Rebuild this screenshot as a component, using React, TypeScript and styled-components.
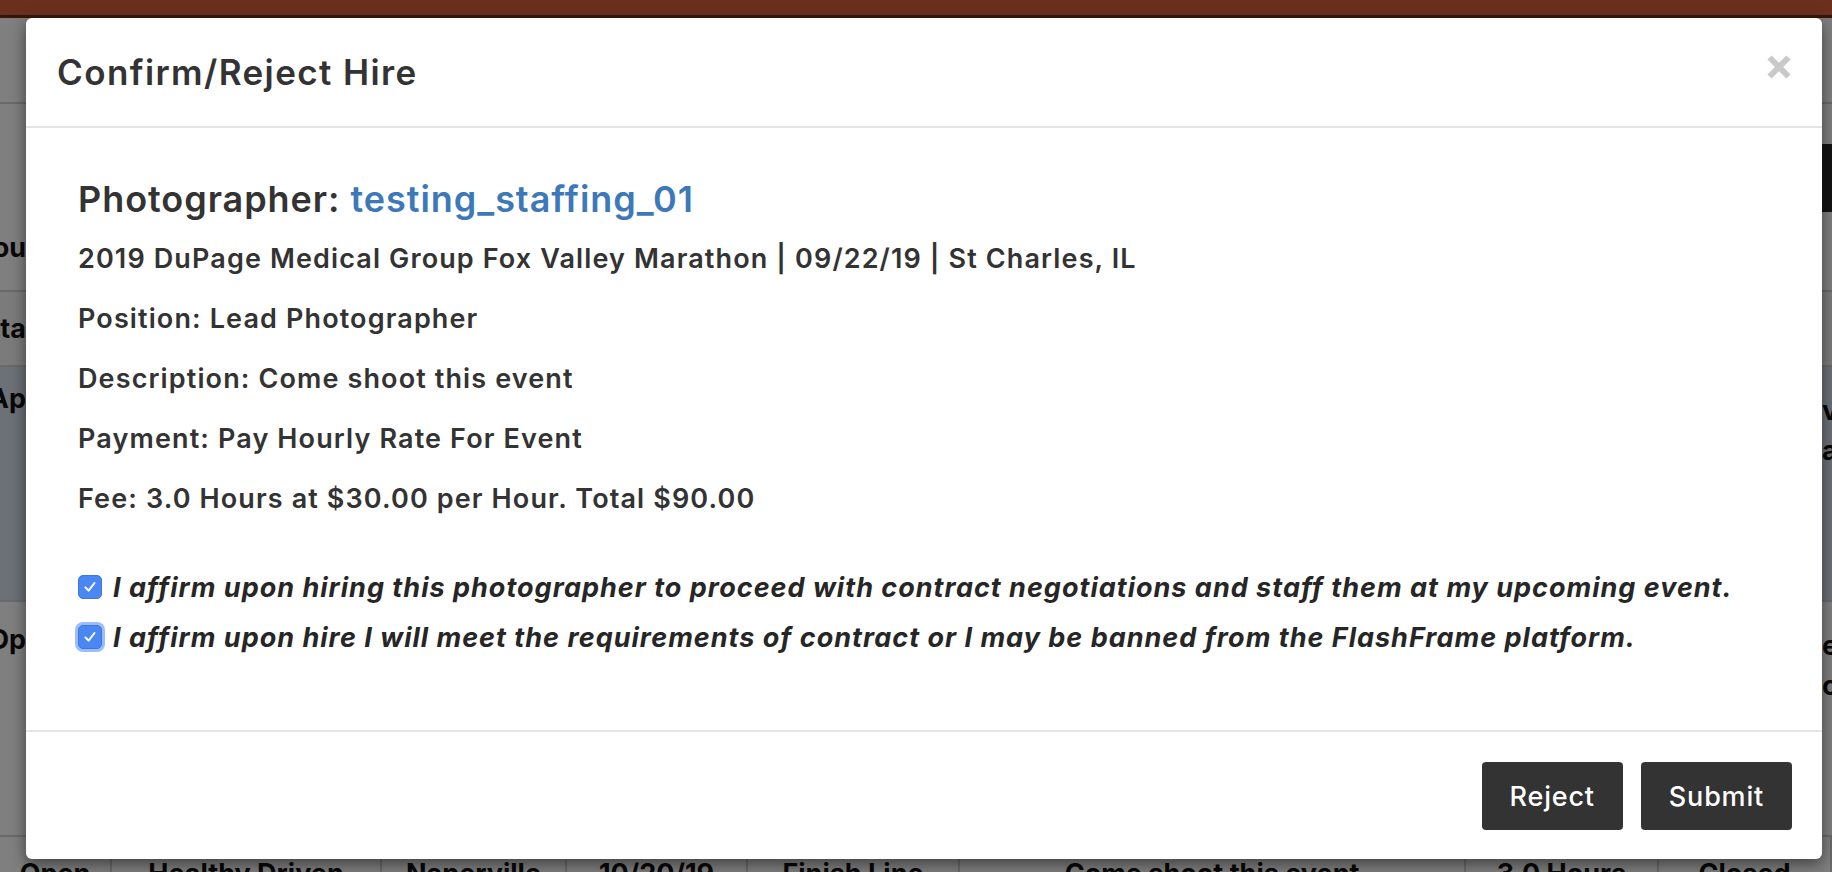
import React from "react";
import styled, { createGlobalStyle } from "styled-components";

const Global = createGlobalStyle`
  html, body { margin: 0; padding: 0; }
  body {
    width: 1832px;
    height: 872px;
    overflow: hidden;
    background: #fff;
    font-family: Inter, "Noto Sans", sans-serif;
  }
`;

const Stage = styled.div`
  position: relative;
  width: 1832px;
  height: 872px;
  overflow: hidden;
`;

/* ---------- dimmed page behind the dialog ---------- */
const Page = styled.div`
  display: flex;
  flex-direction: column;
  height: 100%;
  background: #fff;
  color: #111;
  font-weight: 700;
`;

const TopBar = styled.div`
  flex: none;
  height: 15px;
  background: #d6603a;
  border-bottom: 3px solid #6e2c14;
`;

const Row = styled.div<{ $h: number; $bg?: string }>`
  flex: none;
  display: flex;
  height: ${(p) => p.$h}px;
  background: ${(p) => p.$bg || "#fff"};
  border-bottom: 2px solid #d4d4d4;
`;

const EdgeCell = styled.div<{ $w: number; $align: "start" | "end"; $top?: number }>`
  flex: none;
  width: ${(p) => p.$w}px;
  overflow: hidden;
  display: flex;
  flex-direction: column;
  align-items: ${(p) => (p.$align === "end" ? "flex-end" : "flex-start")};
  justify-content: ${(p) => (p.$top !== undefined ? "flex-start" : "center")};
  padding-top: ${(p) => p.$top || 0}px;
  box-sizing: border-box;
  font-size: 27px;
  line-height: 40px;
  white-space: nowrap;
`;

const Middle = styled.div`
  flex: 1;
`;

const DarkButton = styled.div`
  background: #262626;
  color: #ddd;
  height: 68px;
  padding: 0 12px;
  display: flex;
  align-items: center;
  font-size: 26px;
`;

const BottomRow = styled.div`
  flex: 1;
  display: flex;
  background: #fff;
`;

const BottomCell = styled.div<{ $w: number }>`
  flex: none;
  width: ${(p) => p.$w}px;
  border-right: 2px solid #d4d4d4;
  box-sizing: border-box;
  text-align: center;
  padding-top: 20px;
  font-size: 27px;
  white-space: nowrap;
  overflow: hidden;
`;

const Overlay = styled.div`
  position: absolute;
  inset: 0;
  background: rgba(0, 0, 0, 0.5);
`;

/* ---------- dialog ---------- */
const Dialog = styled.div`
  position: absolute;
  left: 26px;
  top: 18px;
  width: 1796px;
  height: 841px;
  background: #fff;
  border-radius: 6px;
  box-shadow: 0 5px 15px rgba(0, 0, 0, 0.5);
  display: flex;
  flex-direction: column;
  color: #333;
`;

const Header = styled.div`
  flex: none;
  height: 108px;
  display: flex;
  align-items: center;
  justify-content: space-between;
  padding: 0 31px;
  border-bottom: 2px solid #e5e5e5;
`;

const Title = styled.h4`
  margin: 0;
  font-size: 35px;
  font-weight: 600;
  letter-spacing: 1.4px;
  color: #333;
`;

const CloseButton = styled.button`
  border: 0;
  background: none;
  padding: 0;
  margin-bottom: 10px;
  width: 24px;
  height: 24px;
  display: flex;
  cursor: pointer;
`;

const Body = styled.div`
  flex: 1;
  padding: 51px 52px 0;
  display: flex;
  flex-direction: column;
`;

const Heading = styled.h3`
  margin: 0 0 25px;
  font-size: 36px;
  line-height: 40px;
  font-weight: 600;
  letter-spacing: 0.95px;
  color: #333;
`;

const Link = styled.a`
  color: #3d79b8;
  text-decoration: none;
`;

const Line = styled.p`
  margin: 0 0 30px;
  font-size: 27px;
  line-height: 30px;
  font-weight: 600;
  letter-spacing: 1.12px;
  color: #333;
`;

const Affirmations = styled.div`
  margin-top: 28px;
  display: flex;
  flex-direction: column;
  gap: 20px;
`;

const AffirmRow = styled.label`
  display: flex;
  align-items: center;
  gap: 11px;
  height: 30px;
  font-size: 27px;
  font-weight: 700;
  font-style: italic;
  letter-spacing: 1px;
  color: #262626;
`;

const Check = styled.span<{ $focus?: boolean }>`
  flex: none;
  width: 24px;
  height: 24px;
  box-sizing: border-box;
  border-radius: 5px;
  background: #4a87f2;
  border: 1px solid #3c76de;
  display: flex;
  align-items: center;
  justify-content: center;
  box-shadow: ${(p) => (p.$focus ? "0 0 0 3px rgba(74, 135, 242, 0.55)" : "none")};
`;

const Footer = styled.div`
  flex: none;
  border-top: 2px solid #e5e5e5;
  padding: 30px 30px 29px;
  display: flex;
  justify-content: flex-end;
  gap: 18px;
`;

const ActionButton = styled.button`
  height: 68px;
  padding: 0 28px;
  border: 0;
  border-radius: 4px;
  background: #333;
  color: #fff;
  font-family: Inter, "Noto Sans", sans-serif;
  font-size: 27px;
  font-weight: 500;
  letter-spacing: 0.8px;
  cursor: pointer;
`;

const CheckMark = () => (
  <svg width="14" height="14" viewBox="0 0 14 14">
    <path d="M2.5 7.5 L5.6 10.6 L11.5 3" fill="none" stroke="#fff" strokeWidth="2" strokeLinecap="round" strokeLinejoin="round" />
  </svg>
);

const CloseIcon = () => (
  <svg width="24" height="24" viewBox="0 0 24 24">
    <path d="M2.5 2.5 L21.5 21.5 M21.5 2.5 L2.5 21.5" stroke="#c9c9c9" strokeWidth="6" />
  </svg>
);

const details = [
  "2019 DuPage Medical Group Fox Valley Marathon | 09/22/19 | St Charles, IL",
  "Position: Lead Photographer",
  "Description: Come shoot this event",
  "Payment: Pay Hourly Rate For Event",
  "Fee: 3.0 Hours at $30.00 per Hour. Total $90.00",
];

const bottomCells: [number, string][] = [
  [112, "Open"],
  [270, "Healthy Driven"],
  [185, "Naperville"],
  [181, "10/20/19"],
  [212, "Finish Line"],
  [506, "Come shoot this event"],
  [193, "3.0 Hours"],
  [173, "Closed"],
];

export default function App() {
  return (
    <Stage>
      <Global />
      <Page>
        <TopBar />
        <Row $h={84}>
          <EdgeCell $w={26} $align="end" />
          <Middle />
          <EdgeCell $w={10} $align="start" />
        </Row>
        <Row $h={186}>
          <EdgeCell $w={26} $align="end" $top={124}>You</EdgeCell>
          <Middle />
          <EdgeCell $w={10} $align="start" $top={40}>
            <DarkButton>Sign</DarkButton>
          </EdgeCell>
        </Row>
        <Row $h={73} $bg="#f7f7f7">
          <EdgeCell $w={26} $align="end">Sta</EdgeCell>
          <Middle />
          <EdgeCell $w={10} $align="start" />
        </Row>
        <Row $h={233} $bg="#d9e0ef">
          <EdgeCell $w={26} $align="end" $top={12}>Ap</EdgeCell>
          <Middle />
          <EdgeCell $w={10} $align="start" $top={24}>
            <span>view</span>
            <span>apply</span>
          </EdgeCell>
        </Row>
        <Row $h={233}>
          <EdgeCell $w={26} $align="end" $top={18}>Op</EdgeCell>
          <Middle />
          <EdgeCell $w={10} $align="start" $top={24}>
            <span>event</span>
            <span>open</span>
          </EdgeCell>
        </Row>
        <BottomRow>
          {bottomCells.map(([w, t]) => (
            <BottomCell key={t} $w={w}>{t}</BottomCell>
          ))}
        </BottomRow>
      </Page>
      <Overlay />

      <Dialog role="dialog" aria-labelledby="hire-title">
        <Header>
          <Title id="hire-title">Confirm/Reject Hire</Title>
          <CloseButton aria-label="Close">
            <CloseIcon />
          </CloseButton>
        </Header>
        <Body>
          <Heading>
            Photographer: <Link href="#">testing_staffing_01</Link>
          </Heading>
          {details.map((d) => (
            <Line key={d}>{d}</Line>
          ))}
          <Affirmations>
            <AffirmRow>
              <Check>
                <CheckMark />
              </Check>
              I affirm upon hiring this photographer to proceed with contract negotiations and staff them at my upcoming event.
            </AffirmRow>
            <AffirmRow>
              <Check $focus>
                <CheckMark />
              </Check>
              I affirm upon hire I will meet the requirements of contract or I may be banned from the FlashFrame platform.
            </AffirmRow>
          </Affirmations>
        </Body>
        <Footer>
          <ActionButton>Reject</ActionButton>
          <ActionButton>Submit</ActionButton>
        </Footer>
      </Dialog>
    </Stage>
  );
}
